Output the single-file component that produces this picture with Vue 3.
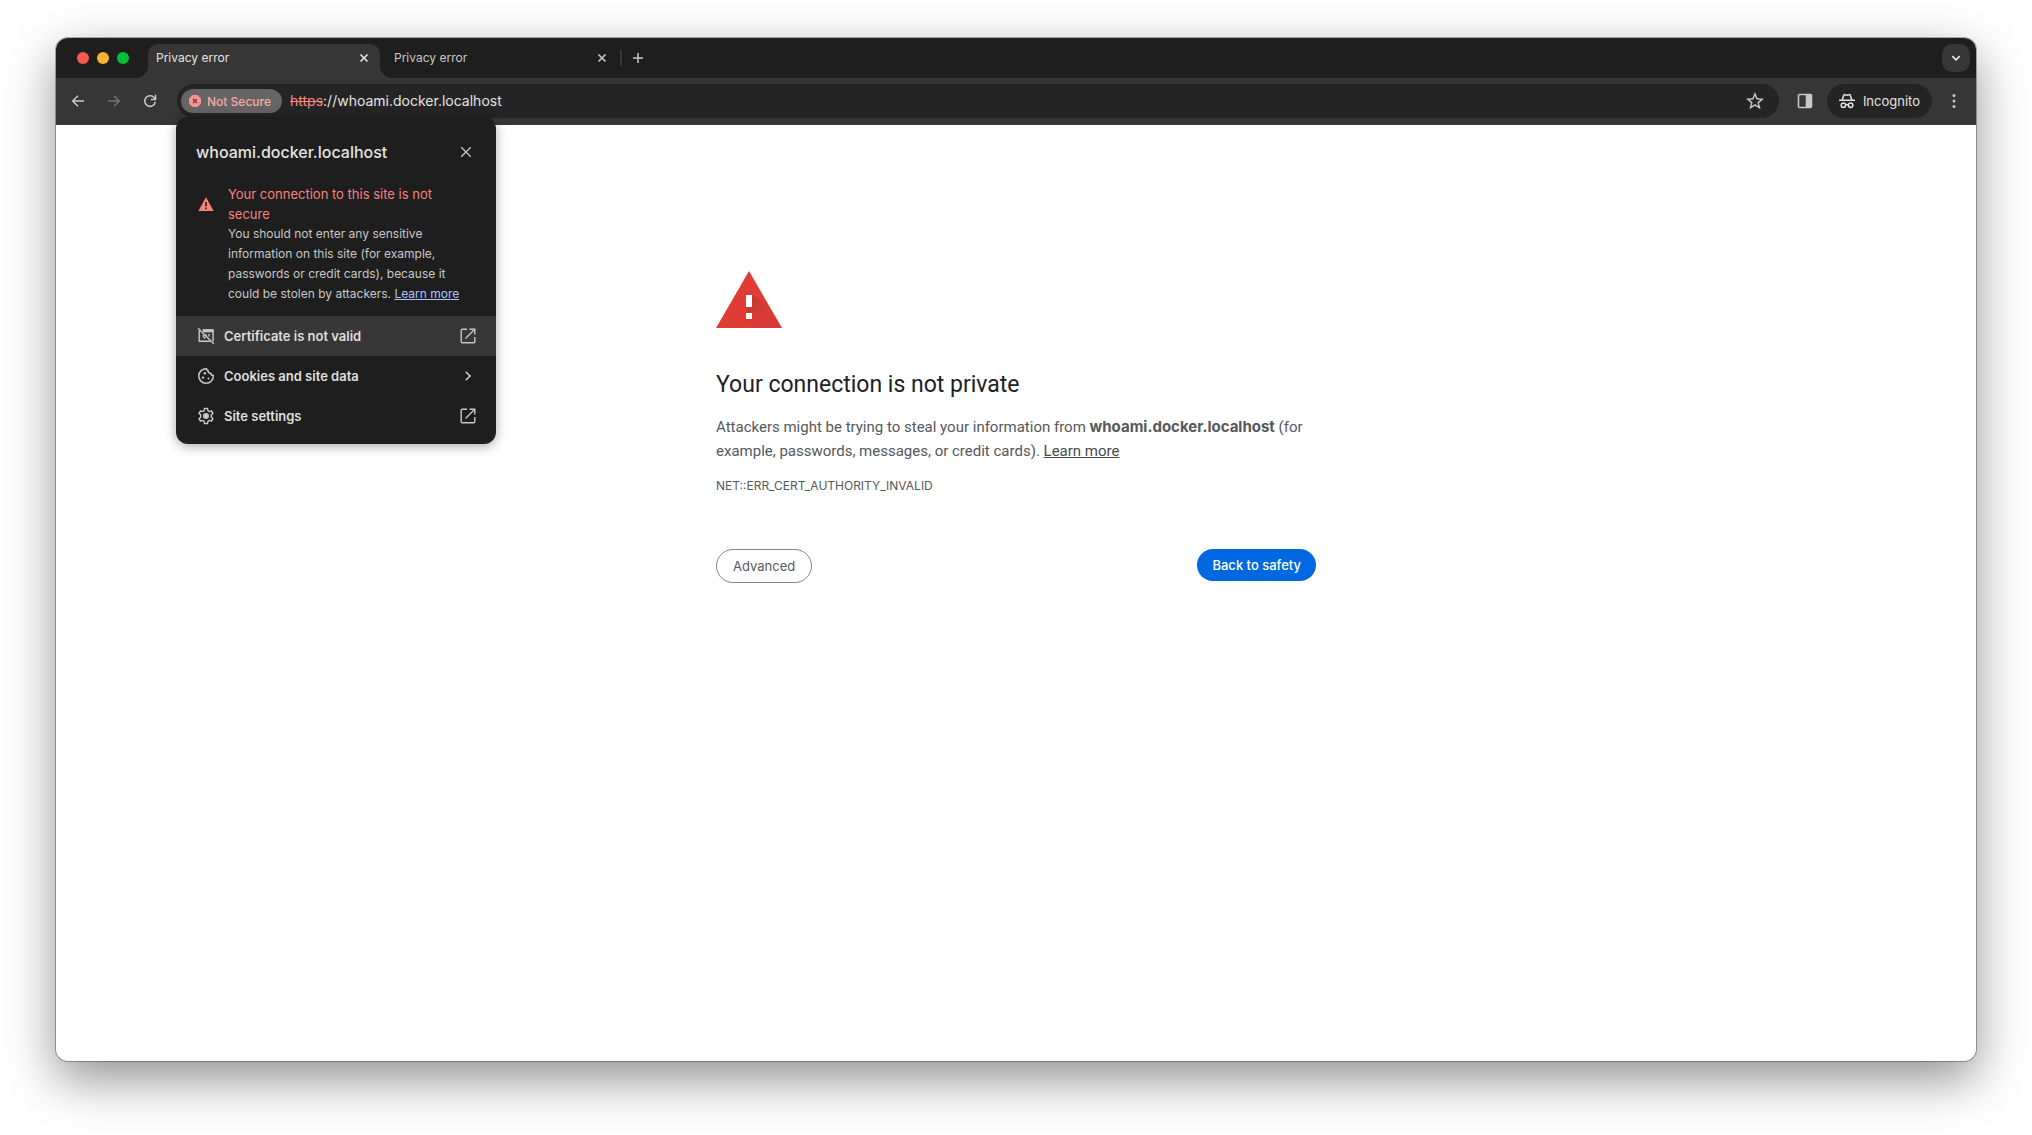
<script setup>
import { ref } from 'vue'

const tabs = ref([
  { id: 1, title: 'Privacy error', active: true },
  { id: 2, title: 'Privacy error', active: false },
])
const address = ref('whoami.docker.localhost')
</script>

<template>
  <div class="desktop">
    <div class="window">
      <header class="strip">
        <div class="lights">
          <span class="light red"></span>
          <span class="light yellow"></span>
          <span class="light green"></span>
        </div>
        <div class="tabs">
          <div v-for="tab in tabs" :key="tab.id" class="tab" :class="{ active: tab.active }">
            <span>{{ tab.title }}</span>
            <button class="icon-btn" aria-label="Close tab">
              <svg width="16" height="16" viewBox="0 0 16 16"><path d="M4.500 4.500l7 7M11.500 4.500l-7 7" stroke="currentColor" stroke-width="1.600" /></svg>
            </button>
          </div>
        </div>
        <span class="divider"></span>
        <button class="icon-btn new-tab" aria-label="New tab">
          <svg width="16" height="16" viewBox="0 0 16 16"><path d="M8 3v10M3 8h10" stroke="currentColor" stroke-width="1.500" /></svg>
        </button>
        <button class="icon-btn search-tabs" aria-label="Search tabs">
          <svg width="16" height="16" viewBox="0 0 16 16"><path d="M4.300 6.200L8 9.800l3.700-3.600" fill="none" stroke="currentColor" stroke-width="1.800" /></svg>
        </button>
      </header>

      <div class="toolbar">
        <nav class="nav">
          <button class="icon-btn" aria-label="Back">
            <svg width="16" height="16" viewBox="0 0 16 16"><path d="M14 8H3M8 2.700L2.700 8 8 13.300" fill="none" stroke="currentColor" stroke-width="1.500" /></svg>
          </button>
          <button class="icon-btn dim" aria-label="Forward">
            <svg width="16" height="16" viewBox="0 0 16 16"><path d="M2 8h11M8 2.700L13.300 8 8 13.300" fill="none" stroke="currentColor" stroke-width="1.500" /></svg>
          </button>
          <button class="icon-btn" aria-label="Reload">
            <svg width="16" height="16" viewBox="0 0 16 16"><path d="M13.300 8.800A5.300 5.300 0 1 1 12 4.500L13.300 6" fill="none" stroke="currentColor" stroke-width="1.600" /><path d="M13.500 1.800v4.700H8.900" fill="none" stroke="currentColor" stroke-width="1.600" /></svg>
          </button>
        </nav>

        <div class="omnibox">
          <button class="chip">
            <svg width="12" height="12" viewBox="0 0 12 12"><path d="M3.600 0h4.800L12 3.600v4.800L8.400 12H3.600L0 8.400V3.600z" fill="#f9958d" /><path d="M4 4l4 4M8 4L4 8" stroke="#5c4a4a" stroke-width="1.500" /></svg>
            <span>Not Secure</span>
          </button>
          <a class="url" href="#"><s>https</s>://{{ address }}</a>
          <button class="icon-btn star" aria-label="Bookmark this tab">
            <svg width="18" height="18" viewBox="0 0 18 18"><path d="M9 1.900l2 4.900 5.200.4-4 3.400 1.300 5.100L9 12.900l-4.500 2.800 1.300-5.100-4-3.400 5.200-.4z" fill="none" stroke="currentColor" stroke-width="1.400" /></svg>
          </button>
        </div>

        <button class="icon-btn side" aria-label="Side panel">
          <svg width="16" height="16" viewBox="0 0 16 16"><path d="M2.500.7h11q1.800 0 1.800 1.800v11q0 1.800-1.800 1.800h-11q-1.800 0-1.800-1.800v-11Q.7.7 2.500.7zM2.300 2.300v11.400h6.400V2.300z" fill="currentColor" fill-rule="evenodd" /></svg>
        </button>
        <button class="incognito">
          <svg width="16" height="16" viewBox="0 0 16 16" fill="none" stroke="currentColor" stroke-width="1.500"><path d="M0 7.200h16M3.200 7l1.500-4.700q.3-.9 1.200-.6L8 2.300l2.100-.6q.9-.3 1.200.6L12.800 7M6.700 12q1.300-.9 2.600 0" /><circle cx="4.400" cy="12.200" r="2.200" /><circle cx="11.600" cy="12.200" r="2.200" /></svg>
          <span>Incognito</span>
        </button>
        <button class="icon-btn menu" aria-label="Menu">
          <svg width="16" height="16" viewBox="0 0 16 16" fill="currentColor"><circle cx="8" cy="2.500" r="1.500" /><circle cx="8" cy="8" r="1.500" /><circle cx="8" cy="13.500" r="1.500" /></svg>
        </button>

        <section class="popup" aria-label="Site information">
          <div class="popup-head">
            <h2>{{ address }}</h2>
            <button class="icon-btn" aria-label="Close">
              <svg width="16" height="16" viewBox="0 0 16 16"><path d="M3.200 3.200l9.600 9.600M12.800 3.200l-9.600 9.600" stroke="currentColor" stroke-width="1.300" /></svg>
            </button>
          </div>
          <div class="notice">
            <svg width="16" height="16" viewBox="0 0 16 16"><path d="M8 1.200L15.700 15H.3z" fill="#f8827a" /><path d="M8 6v4.200M8 11.500v1.800" stroke="#1e1e1e" stroke-width="1.600" /></svg>
            <div>
              <p class="notice-title">Your connection to this site is not secure</p>
              <p>You should not enter any sensitive information on this site (for example, passwords or credit cards), because it could be stolen by attackers. <a href="#">Learn more</a></p>
            </div>
          </div>
          <button class="row hover">
            <svg width="18" height="18" viewBox="0 0 18 18" fill="none" stroke="currentColor" stroke-width="1.400"><path d="M2.200 3.500v10.800h11.200M5.500 2.900h10.600v11.300" /><path d="M6 3.800h10" stroke-width="3" /><path d="M1 1.300l15.800 15.500M6.300 8v1.300l2 2.200M9.500 7.500l-1 1.500M12 7v2.500" /></svg>
            <span>Certificate is not valid</span>
            <svg width="16" height="16" viewBox="0 0 16 16" fill="none" stroke="currentColor" stroke-width="1.400"><path d="M7 1.200H2.200q-1 0-1 1v11.600q0 1 1 1h11.600q1 0 1-1V9M9.500 1.200h5.300v5.300M14.500 1.500L5.500 10.500" /></svg>
          </button>
          <button class="row">
            <svg width="18" height="18" viewBox="0 0 18 18" fill="none" stroke="currentColor" stroke-width="1.500"><path d="M9.500 1.700A7.300 7.300 0 1 0 16.300 8.500Q14 8.600 13.600 6.200 10.800 6.200 11 3.500 9.400 3.400 9.500 1.700z" /><g fill="currentColor" stroke="none"><circle cx="7.800" cy="6.300" r="1.200" /><circle cx="6" cy="10.600" r="1.200" /><circle cx="11.500" cy="11.600" r="1" /></g></svg>
            <span>Cookies and site data</span>
            <svg width="16" height="16" viewBox="0 0 16 16" fill="none" stroke="currentColor" stroke-width="1.600"><path d="M5.800 3.700L10 8l-4.200 4.300" /></svg>
          </button>
          <button class="row">
            <svg width="18" height="18" viewBox="0 0 18 18" fill="none" stroke="currentColor" stroke-width="1.400"><path d="M7.500 1.500h3l.4 2.200 1.500.9 2.100-.8 1.500 2.600-1.700 1.400v2.400l1.700 1.400-1.500 2.600-2.100-.8-1.500.9-.4 2.200h-3l-.4-2.200-1.500-.9-2.100.8L2 11.600l1.700-1.400V7.800L2 6.400l1.500-2.600 2.100.8 1.500-.9z" stroke-linejoin="round" /><circle cx="9" cy="9" r="3" fill="currentColor" stroke="none" /></svg>
            <span>Site settings</span>
            <svg width="16" height="16" viewBox="0 0 16 16" fill="none" stroke="currentColor" stroke-width="1.400"><path d="M7 1.200H2.200q-1 0-1 1v11.600q0 1 1 1h11.600q1 0 1-1V9M9.500 1.200h5.300v5.300M14.500 1.500L5.500 10.500" /></svg>
          </button>
        </section>
      </div>

      <main class="page">
        <svg class="warning" width="66" height="57" viewBox="0 0 66 57">
          <defs>
            <linearGradient id="shade" x1="0" y1="0" x2="1" y2="1">
              <stop offset="0" stop-color="#262626" stop-opacity=".22" />
              <stop offset=".5" stop-color="#262626" stop-opacity=".03" />
            </linearGradient>
          </defs>
          <path d="M33 0l33 57H0z" fill="#df3c35" />
          <path d="M36 24l17 11 13 22H38l-8-9h6l-6-12h6z" fill="url(#shade)" />
          <path d="M30 24h6v12h-6zM30 42h6v6h-6z" fill="#fff" />
        </svg>
        <h1>Your connection is not private</h1>
        <p class="message">Attackers might be trying to steal your information from <strong>{{ address }}</strong> (for example, passwords, messages, or credit cards). <a href="#">Learn more</a></p>
        <p class="code">NET::ERR_CERT_AUTHORITY_INVALID</p>
        <div class="actions">
          <button class="secondary">Advanced</button>
          <button class="primary">Back to safety</button>
        </div>
      </main>
    </div>
  </div>
</template>

<style>
body {
  margin: 0;
  background: #fff;
}
</style>

<style scoped>
* {
  box-sizing: border-box;
}
.desktop {
  padding: 38px 56px 74px;
  font-family: Inter, "Liberation Sans", sans-serif;
  font-size: 12px;
}
h1, h2, p {
  margin: 0;
}
button {
  border: 0;
  padding: 0;
  background: none;
  font: inherit;
  color: inherit;
}
svg {
  display: block;
  flex: none;
}
.window {
  min-height: calc(100vh - 112px);
  border-radius: 12px;
  background: #fff;
  box-shadow: 0 0 0 1px rgba(0, 0, 0, 0.3), 0 18px 50px rgba(0, 0, 0, 0.44);
}
.strip {
  display: flex;
  align-items: center;
  height: 40px;
  padding: 0 6px 0 21px;
  border-radius: 12px 12px 0 0;
  background: #1e1e1e;
  color: #c7c7c7;
}
.lights {
  display: flex;
  gap: 8px;
  width: 71px;
}
.light {
  width: 12px;
  height: 12px;
  border-radius: 50%;
}
.red { background: #ff5650; }
.yellow { background: #fdb133; }
.green { background: #00c236; }
.tabs {
  display: flex;
  align-self: flex-end;
  gap: 6px;
}
.tab {
  position: relative;
  display: flex;
  align-items: center;
  justify-content: space-between;
  width: 232px;
  height: 34px;
  padding: 0 8px 6px;
  line-height: 16px;
}
.tab.active {
  border-radius: 10px 10px 0 0;
  background: #363636;
  color: #e3e3e3;
}
.tab.active::before,
.tab.active::after {
  content: "";
  position: absolute;
  bottom: 0;
  width: 12px;
  height: 12px;
}
.tab.active::before {
  right: 100%;
  background: radial-gradient(circle at 0 0, transparent 12px, #363636 12px);
}
.tab.active::after {
  left: 100%;
  background: radial-gradient(circle at 100% 0, transparent 12px, #363636 12px);
}
.icon-btn {
  display: flex;
  align-items: center;
  justify-content: center;
}
.divider {
  width: 2px;
  height: 16px;
  margin: 0 8px 0 2px;
  background: #363636;
}
.search-tabs {
  width: 28px;
  height: 28px;
  margin-left: auto;
  border-radius: 10px;
  background: #363636;
  color: #e3e3e3;
}
.toolbar {
  position: relative;
  display: flex;
  align-items: center;
  height: 47px;
  padding: 0 14px 1px;
  background: #363636;
  color: #c7c7c7;
}
.nav {
  display: flex;
  gap: 20px;
  width: 107px;
}
.dim {
  color: #757575;
}
.omnibox {
  display: flex;
  flex: 1;
  align-items: center;
  height: 34px;
  padding: 0 15px 0 4px;
  border-radius: 17px;
  background: #242424;
}
.chip {
  display: flex;
  align-items: center;
  gap: 6px;
  height: 24px;
  padding: 0 11px 0 8px;
  border-radius: 12px;
  background: #656565;
  color: #f9aaa4;
  font-weight: 500;
}
.url {
  margin-left: 8px;
  font-size: 14px;
  line-height: 18px;
  color: #e3e3e3;
  text-decoration: none;
}
.url s {
  color: #f28b82;
}
.star {
  margin-left: auto;
}
.side {
  margin: 0 14px 0 18px;
}
.incognito {
  display: flex;
  align-items: center;
  gap: 8px;
  height: 34px;
  padding: 0 12px;
  border-radius: 17px;
  background: #242424;
  color: #e3e3e3;
  font-size: 13px;
}
.menu {
  margin-left: 14px;
}
.popup {
  position: absolute;
  top: 39px;
  left: 120px;
  width: 320px;
  padding-bottom: 8px;
  border-radius: 12px;
  background: #1e1e1e;
  box-shadow: 0 2px 12px rgba(0, 0, 0, 0.35);
}
.popup-head {
  display: flex;
  align-items: center;
  justify-content: space-between;
  height: 67px;
  padding: 2px 22px 0 20px;
}
.popup-head h2 {
  font-size: 16px;
  font-weight: 500;
  color: #e3e3e3;
}
.notice {
  display: flex;
  gap: 14px;
  padding: 0 30px 12px 22px;
  line-height: 20px;
}
.notice svg {
  margin-top: 12px;
}
.notice-title {
  font-size: 13px;
  color: #f8827a;
}
.notice p {
  color: #c7c7c7;
}
.notice .notice-title {
  color: #f8827a;
}
.notice a {
  color: #a8c7fa;
}
.row {
  display: flex;
  align-items: center;
  gap: 9px;
  width: 100%;
  height: 40px;
  padding: 0 20px 0 21px;
  font-size: 13px;
  font-weight: 600;
  color: #c7c7c7;
}
.row span {
  flex: 1;
  text-align: left;
  color: #dedede;
}
.row.hover {
  background: #373737;
}
.page {
  max-width: 600px;
  margin: 0 auto;
  padding: 146px 0 40px;
  color: #55585d;
}
h1 {
  margin-top: 41px;
  font-family: Roboto, "Liberation Sans", sans-serif;
  font-size: 23px;
  font-weight: 400;
  line-height: 32px;
  color: #202124;
}
.message {
  margin-top: 14px;
  font-family: Roboto, "Liberation Sans", sans-serif;
  font-size: 15px;
  line-height: 24px;
}
.message strong {
  font-family: Inter, "Liberation Sans", sans-serif;
}
.message a {
  color: #47494d;
}
.code {
  margin-top: 13px;
  line-height: 20px;
}
.actions {
  display: flex;
  align-items: flex-start;
  justify-content: space-between;
  margin-top: 53px;
  font-size: 13px;
}
.secondary {
  height: 34px;
  padding: 0 16px;
  border: 1px solid #80868b;
  border-radius: 17px;
}
.primary {
  height: 32px;
  padding: 0 15px;
  border-radius: 16px;
  background: #0069e2;
  color: #fff;
  font-weight: 500;
}
</style>
